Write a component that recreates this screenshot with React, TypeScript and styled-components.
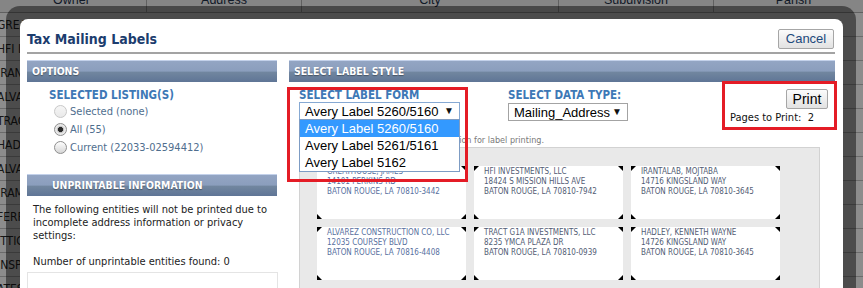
import React from "react";
import styled, { createGlobalStyle, css } from "styled-components";

const GlobalStyle = createGlobalStyle`
  html, body { margin: 0; padding: 0; }
  body { width: 863px; height: 288px; overflow: hidden; background: #fff; }
`;

const ui = css`
  font-family: "DejaVu Sans", Verdana, sans-serif;
  font-stretch: condensed;
`;
const arial = css`
  font-family: "Liberation Sans", Arial, sans-serif;
`;

const Page = styled.div`
  position: relative;
  width: 863px;
  height: 288px;
  overflow: hidden;
  background: #fff;
`;

/* ---------- background grid ---------- */
const BgTable = styled.div`
  margin-left: -3px;
  margin-top: -9px;
  display: grid;
  grid-template-columns: 150px 155px 257px 155px 160px;
  ${ui}
`;
const HeadCell = styled.div`
  height: 22px;
  box-sizing: border-box;
  padding-bottom: 4px;
  border-bottom: 1px solid #b0b0b0;
  border-right: 1px solid #b0b0b0;
  display: flex;
  align-items: center;
  justify-content: center;
  ${arial}
  font-size: 12.5px;
  color: #1e3048;
  background: #f2f2f2;
`;
const Cell = styled.div`
  height: 24px;
  box-sizing: border-box;
  border-bottom: 1px solid #c4c4c4;
  display: flex;
  align-items: center;
  font-size: 12px;
  color: #2a2a2a;
  white-space: nowrap;
  overflow: hidden;
`;
const Dim = styled.div`
  position: absolute;
  inset: 0;
  background: rgba(0, 0, 0, 0.45);
`;

/* ---------- modal ---------- */
const Frame = styled.div`
  position: absolute;
  left: 6px;
  top: 6px;
  width: 850px;
  height: 330px;
  box-sizing: border-box;
  padding: 13px 13px 0 14px;
  background: rgba(0, 0, 0, 0.46);
  border-radius: 14px;
`;
const Dialog = styled.div`
  height: 100%;
  box-sizing: border-box;
  background: #fff;
  border-radius: 8px 8px 0 0;
  padding: 9px 8px 0 7px;
`;
const Header = styled.div`
  display: flex;
  align-items: center;
  justify-content: space-between;
  height: 21px;
`;
const Title = styled.h1`
  margin: 0;
  ${ui}
  font-weight: bold;
  font-size: 14px;
  color: #1c3d6e;
`;
const Btn = styled.button<{ $w: number; $size?: number; $tone?: string }>`
  width: ${(p) => p.$w}px;
  height: 20px;
  padding: 0;
  margin: 0;
  ${arial}
  font-size: ${(p) => p.$size ?? 13}px;
  line-height: 18px;
  color: ${(p) => p.$tone ?? "#000"};
  background: linear-gradient(#fbfbfb, #e2e2e2);
  border: 1px solid #a6a6a6;
  border-radius: 2px;
`;
const Rule = styled.div`
  margin-top: 3px;
  border-top: 2px solid #a3a3a3;
`;
const Body = styled.div`
  margin-top: 6px;
  display: grid;
  grid-template-columns: 250px 546px;
  column-gap: 12px;
`;
const Column = styled.div`
  display: flex;
  flex-direction: column;
`;
const SectionBar = styled.div<{ $indent?: number }>`
  height: 22px;
  box-sizing: border-box;
  padding-left: ${(p) => p.$indent ?? 5}px;
  display: flex;
  align-items: center;
  background: linear-gradient(
    to bottom,
    #c3d1ea 0,
    #c3d1ea 1px,
    #93a5c3 1px,
    #8b9ebd 50%,
    #71869f 56%,
    #5f7596 100%
  );
  ${ui}
  font-weight: bold;
  font-size: 10.4px;
  color: #fff;
  text-shadow: 0 1px 1px rgba(0, 0, 0, 0.35);
`;
const ListingBlock = styled.div`
  height: 92px;
  box-sizing: border-box;
  padding: 7px 0 0 22px;
`;
const FieldLabel = styled.div`
  ${ui}
  font-weight: bold;
  font-size: 11.5px;
  line-height: 13px;
  color: #3d78b6;
  white-space: nowrap;
`;
const RadioRow = styled.label`
  height: 18px;
  display: flex;
  align-items: center;
  gap: 3px;
  padding-left: 5px;
  ${ui}
  font-size: 11px;
  color: #4f6e8e;
`;
const RadioDot = styled.span<{ $checked?: boolean; $disabled?: boolean }>`
  width: 13px;
  height: 13px;
  box-sizing: border-box;
  border-radius: 50%;
  border: 1px solid ${(p) => (p.$disabled ? "#c8c8c8" : "#8e8e8e")};
  background: ${(p) =>
    p.$checked
      ? "radial-gradient(circle, #2b2b2b 0, #2b2b2b 2.3px, #b8b8b8 2.8px, #e6e6e6 4px, #f3f3f3 100%)"
      : p.$disabled
      ? "linear-gradient(#f6f6f6, #e9e9e9)"
      : "linear-gradient(#fdfdfd, #d6d6d6)"};
`;
const Para = styled.p<{ $top: number }>`
  margin: ${(p) => p.$top}px 0 0;
  padding: 0 6px;
  ${ui}
  font-size: 11px;
  line-height: 13px;
  color: #222;
`;
const EmptyBox = styled.div`
  margin-top: 4px;
  height: 60px;
  width: 249px;
  border: 1px solid #e4e4e4;
`;

/* right column */
const Controls = styled.div`
  height: 38px;
  box-sizing: border-box;
  display: flex;
  align-items: flex-start;
  padding: 7px 7px 0 10px;
`;
const FormGroup = styled.div<{ $ml?: number }>`
  position: relative;
  margin-left: ${(p) => p.$ml ?? 0}px;
  display: flex;
  flex-direction: column;
`;
const FakeSelect = styled.div<{ $w: number; $focus?: boolean; $mt?: number }>`
  width: ${(p) => p.$w}px;
  height: 18px;
  margin-top: ${(p) => p.$mt ?? 0}px;
  box-sizing: border-box;
  border: 1px solid ${(p) => (p.$focus ? "#86a9d3" : "#a3a3a3")};
  padding: 0 5px 0 5px;
  display: flex;
  align-items: center;
  justify-content: space-between;
  ${arial}
  font-size: 13px;
  color: #000;
  background: #fff;
  white-space: nowrap;
`;
const Arrow = styled.span`
  font-size: 10px;
  line-height: 1;
  color: #111;
`;
const DropList = styled.ul`
  position: absolute;
  left: 0;
  top: 30px;
  z-index: 5;
  width: 161px;
  box-sizing: border-box;
  margin: 0;
  padding: 0;
  list-style: none;
  border: 1px solid #7d9cc4;
  background: #fff;
`;
const DropItem = styled.li<{ $active?: boolean }>`
  height: 17px;
  line-height: 17px;
  padding-left: 5px;
  ${arial}
  font-size: 13px;
  background: ${(p) => (p.$active ? "#3399ff" : "#fff")};
  color: ${(p) => (p.$active ? "#fff" : "#000")};
  white-space: nowrap;
`;
const PrintGroup = styled.div`
  margin-left: auto;
  width: 98px;
  display: flex;
  flex-direction: column;
  align-items: flex-end;
`;
const PagesText = styled.div`
  align-self: flex-start;
  margin-top: 2px;
  ${ui}
  font-size: 11px;
  line-height: 14px;
  color: #111;
  white-space: pre;
`;
const Hint = styled.div`
  margin-top: 14px;
  padding-left: 14px;
  height: 13px;
  ${ui}
  font-size: 9px;
  line-height: 13px;
  color: #7a7a7a;
  white-space: nowrap;
`;
const Preview = styled.div`
  margin: 0 15px 0 10px;
  height: 200px;
  box-sizing: border-box;
  border: 1px solid #d2d2d2;
  background: #e9e9e9;
  padding: 18px 0 0 17px;
`;
const LabelGrid = styled.div`
  display: grid;
  grid-template-columns: repeat(3, 149px);
  grid-auto-rows: 53px;
  column-gap: 8px;
  row-gap: 8px;
`;
const LabelCard = styled.div<{ $tone: string }>`
  position: relative;
  background: #fff;
  padding: 1px 10px 0;
  ${ui}
  font-size: 8px;
  line-height: 10px;
  color: ${(p) => p.$tone};
  white-space: nowrap;
`;
type Pos = "tl" | "tr" | "bl" | "br";
const Corner = styled.span<{ $pos: Pos }>`
  position: absolute;
  width: 0;
  height: 0;
  ${(p) => (p.$pos[0] === "t" ? "top: 0;" : "bottom: 0;")}
  ${(p) => (p.$pos[1] === "l" ? "left: 0;" : "right: 0;")}
  ${(p) =>
    p.$pos[0] === "t" ? "border-top: 5px solid #000;" : "border-bottom: 5px solid #000;"}
  ${(p) =>
    p.$pos[1] === "l"
      ? "border-right: 5px solid transparent;"
      : "border-left: 5px solid transparent;"}
`;
const RedBox = styled.div<{ $x: number; $y: number; $w: number; $h: number }>`
  position: absolute;
  left: ${(p) => p.$x}px;
  top: ${(p) => p.$y}px;
  width: ${(p) => p.$w}px;
  height: ${(p) => p.$h}px;
  box-sizing: border-box;
  border: 3px solid #e41c26;
  z-index: 10;
  pointer-events: none;
`;

const heads = ["Owner", "Address", "City", "Subdivision", "Parish"];
const owners = [
  "GREATHOUSE, JAMES",
  "HFI INVESTMENTS, LLC",
  "IRANTALAB, MOJTABA",
  "ALVAREZ CONSTRUCTION CO, LLC",
  "TRACT G1A INVESTMENTS, LLC",
  "HADLEY, KENNETH WAYNE",
  "ALVAREZ CONSTRUCTION CO, LLC",
  "IRAMAIN, DAVID",
  "FERRARA, JOSEPH",
  "ITTIG, ROBERT",
  "INSPIRED HOMES, LLC",
  "ATES, MICHAEL",
];

const labels = [
  ["GREATHOUSE, JAMES", "14101 PERKINS RD", "BATON ROUGE, LA 70810-3442"],
  ["HFI INVESTMENTS, LLC", "18424 S MISSION HILLS AVE", "BATON ROUGE, LA 70810-7942"],
  ["IRANTALAB, MOJTABA", "14716 KINGSLAND WAY", "BATON ROUGE, LA 70810-3645"],
  ["ALVAREZ CONSTRUCTION CO, LLC", "12035 COURSEY BLVD", "BATON ROUGE, LA 70816-4408"],
  ["TRACT G1A INVESTMENTS, LLC", "8235 YMCA PLAZA DR", "BATON ROUGE, LA 70810-0939"],
  ["HADLEY, KENNETH WAYNE", "14726 KINGSLAND WAY", "BATON ROUGE, LA 70810-3645"],
];

const corners: Pos[] = ["tl", "tr", "bl", "br"];

export default function App() {
  return (
    <Page>
      <GlobalStyle />
      <BgTable>
        {heads.map((h) => (
          <HeadCell key={h}>{h}</HeadCell>
        ))}
        {owners.map((o, i) => (
          <React.Fragment key={i}>
            <Cell>{o}</Cell>
            <Cell />
            <Cell />
            <Cell />
            <Cell />
          </React.Fragment>
        ))}
      </BgTable>
      <Dim />
      <Frame>
        <Dialog>
          <Header>
            <Title>Tax Mailing Labels</Title>
            <Btn $w={56} $tone="#1d4a7c" style={{ marginRight: 1 }}>
              Cancel
            </Btn>
          </Header>
          <Rule />
          <Body>
            <Column>
              <SectionBar>OPTIONS</SectionBar>
              <ListingBlock>
                <FieldLabel>SELECTED LISTING(S)</FieldLabel>
                <RadioRow>
                  <RadioDot $disabled />
                  Selected (none)
                </RadioRow>
                <RadioRow>
                  <RadioDot $checked />
                  All (55)
                </RadioRow>
                <RadioRow>
                  <RadioDot />
                  Current (22033-02594412)
                </RadioRow>
              </ListingBlock>
              <SectionBar $indent={25}>UNPRINTABLE INFORMATION</SectionBar>
              <Para $top={7}>
                The following entities will not be printed due to incomplete address
                information or privacy settings:
              </Para>
              <Para $top={13}>Number of unprintable entities found: 0</Para>
              <EmptyBox />
            </Column>
            <Column>
              <SectionBar>SELECT LABEL STYLE</SectionBar>
              <Controls>
                <FormGroup>
                  <FieldLabel>SELECT LABEL FORM</FieldLabel>
                  <FakeSelect $w={161} $focus>
                    Avery Label 5260/5160 <Arrow>▼</Arrow>
                  </FakeSelect>
                  <DropList>
                    <DropItem $active>Avery Label 5260/5160</DropItem>
                    <DropItem>Avery Label 5261/5161</DropItem>
                    <DropItem>Avery Label 5162</DropItem>
                  </DropList>
                </FormGroup>
                <FormGroup $ml={48}>
                  <FieldLabel>SELECT DATA TYPE:</FieldLabel>
                  <FakeSelect $w={120} $mt={1}>
                    Mailing_Address <Arrow>▼</Arrow>
                  </FakeSelect>
                </FormGroup>
                <PrintGroup>
                  <Btn $w={42} $size={14}>
                    Print
                  </Btn>
                  <PagesText>{"Pages to Print:  2"}</PagesText>
                </PrintGroup>
              </Controls>
              <Hint>Use Actual Size setting in the print option for label printing.</Hint>
              <Preview>
                <LabelGrid>
                  {labels.map((l, i) => (
                    <LabelCard key={i} $tone={i % 3 === 0 ? "#5870a0" : "#525c74"}>
                      {corners.map((c) => (
                        <Corner key={c} $pos={c} />
                      ))}
                      {l.map((line) => (
                        <div key={line}>{line}</div>
                      ))}
                    </LabelCard>
                  ))}
                </LabelGrid>
              </Preview>
            </Column>
          </Body>
        </Dialog>
      </Frame>
      <RedBox $x={287} $y={87} $w={181} $h={95} />
      <RedBox $x={722} $y={81} $w={115} $h={49} />
    </Page>
  );
}
